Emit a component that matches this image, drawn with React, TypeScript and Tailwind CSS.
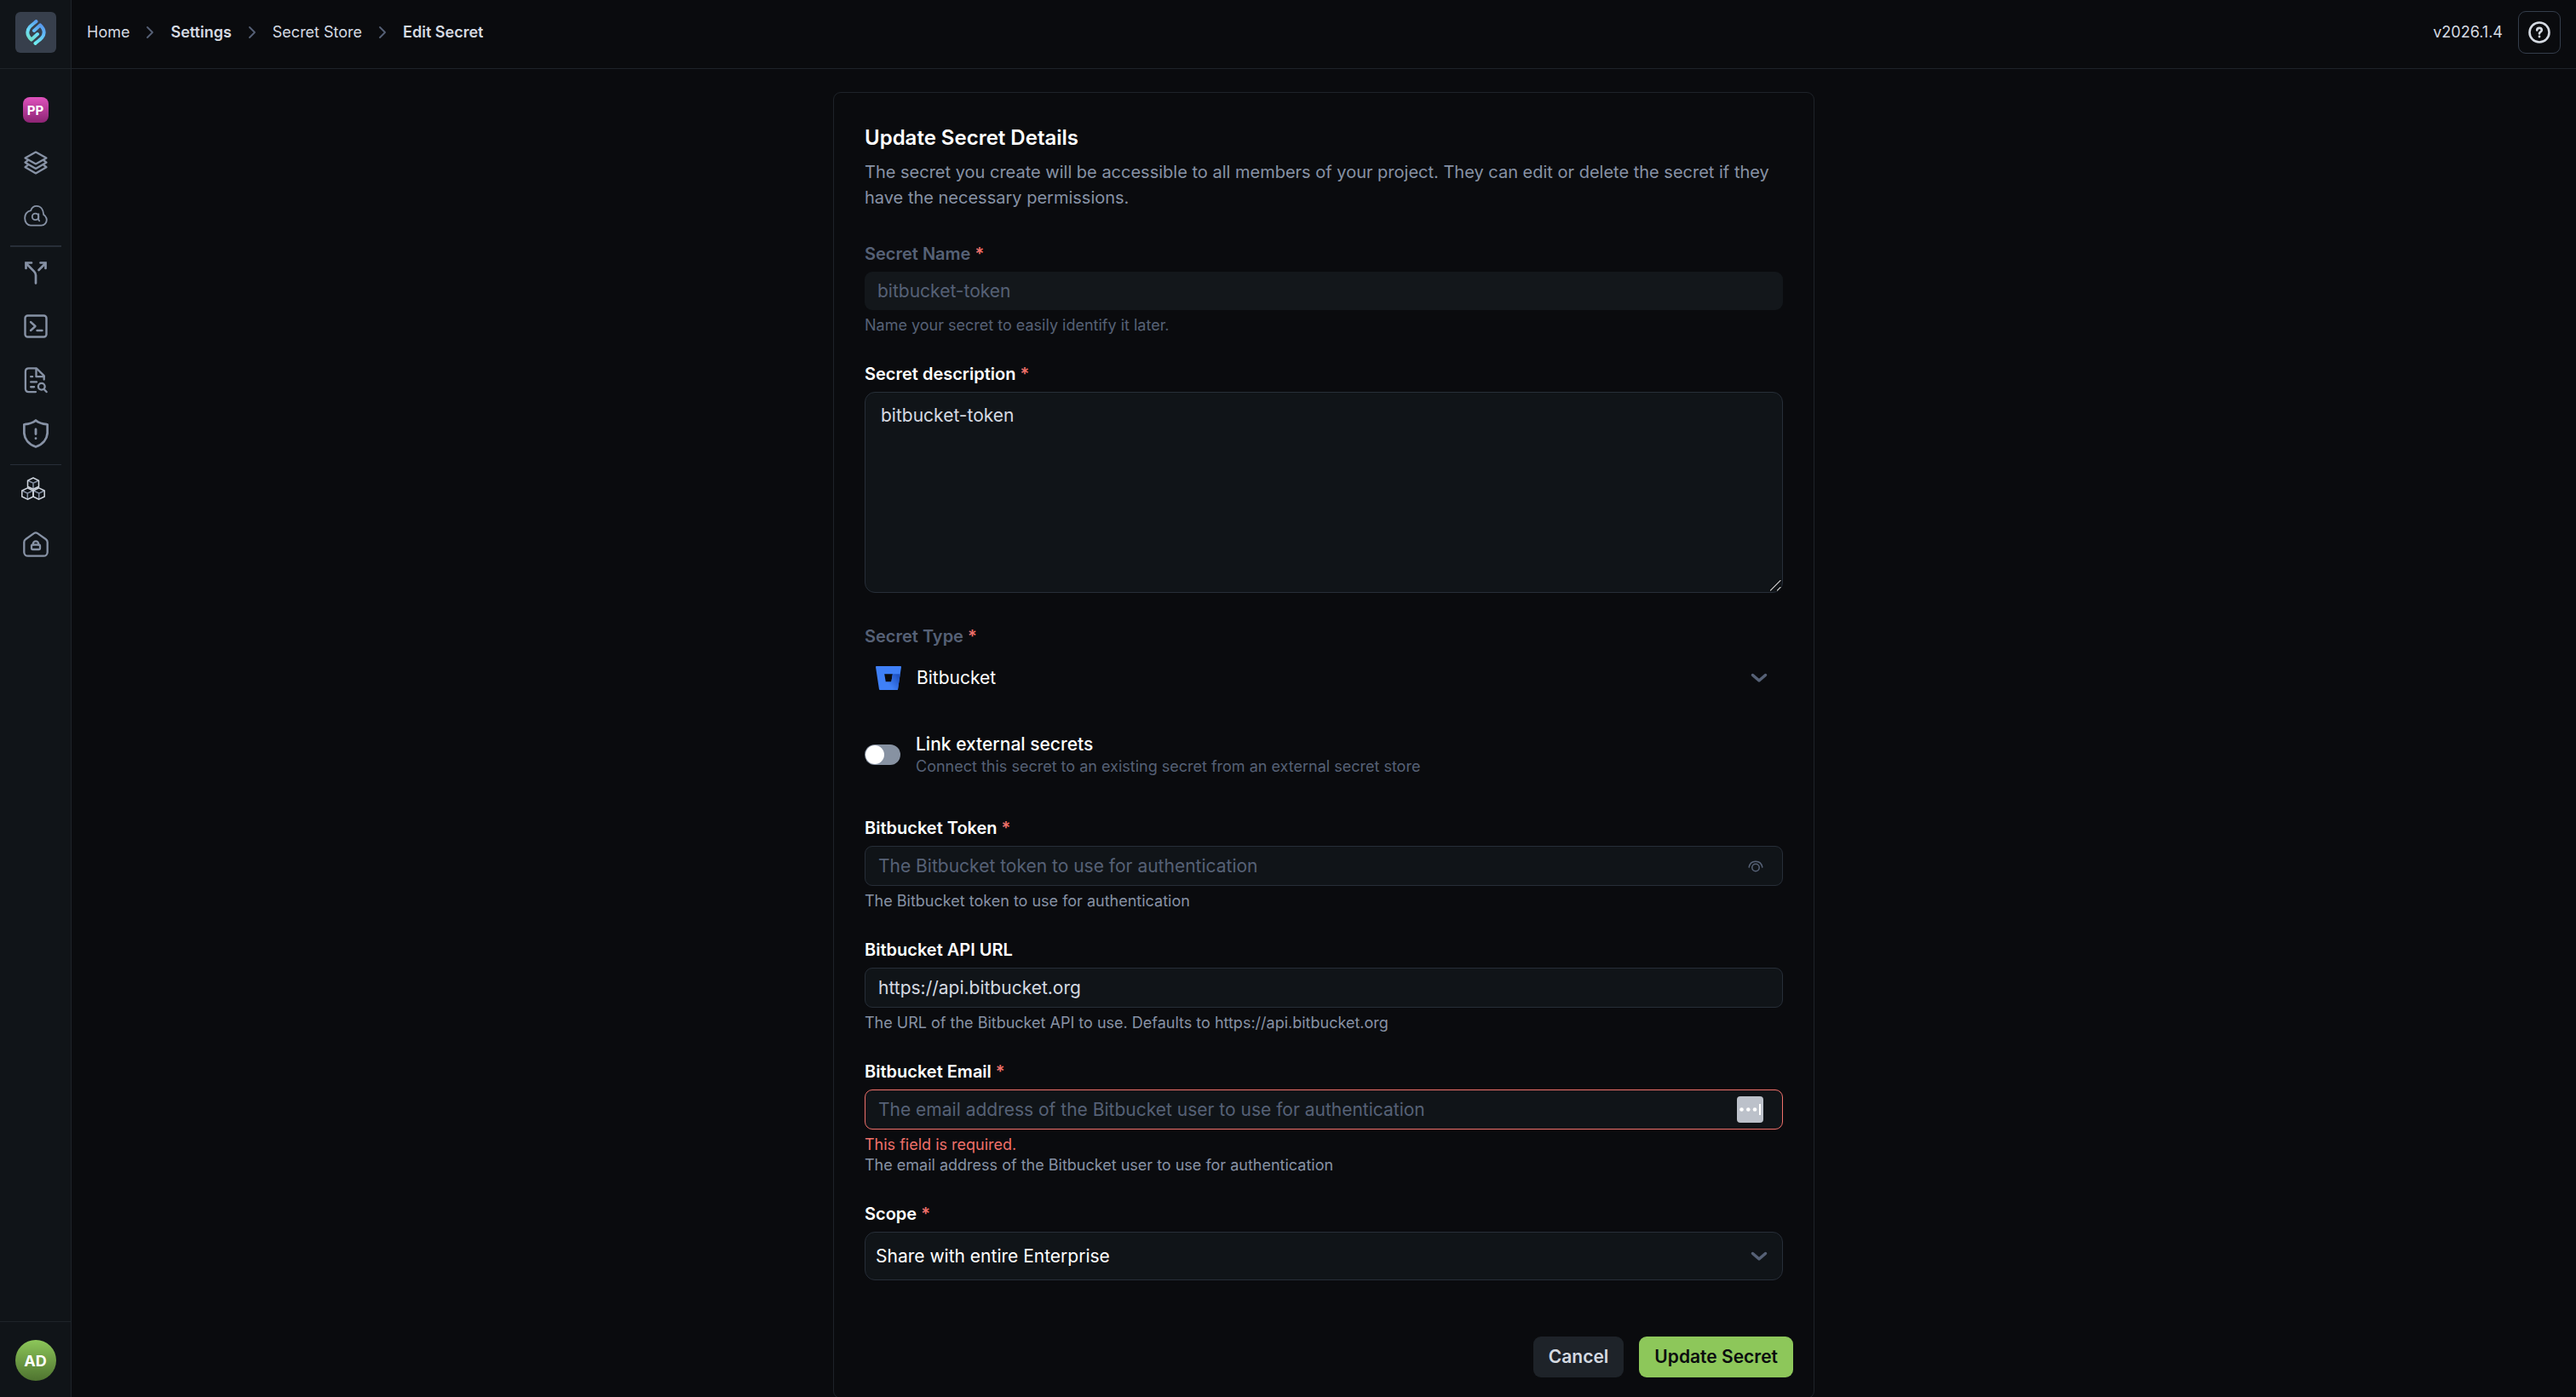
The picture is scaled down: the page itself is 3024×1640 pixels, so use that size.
import React, { useState } from "react";

type IconProps = { className?: string };

function LogoIcon() {
  return (
    <svg viewBox="0 0 24 30" className="h-[30px] w-6" fill="none" strokeWidth="4" strokeLinecap="round" strokeLinejoin="round" aria-hidden="true">
      <defs>
        <linearGradient id="logo-a" x1="4" y1="26" x2="14" y2="2" gradientUnits="userSpaceOnUse">
          <stop offset="0" stopColor="#72dfc0" />
          <stop offset="0.5" stopColor="#6cdcfa" />
          <stop offset="1" stopColor="#5a9df0" />
        </linearGradient>
        <linearGradient id="logo-b" x1="10" y1="28" x2="20" y2="4" gradientUnits="userSpaceOnUse">
          <stop offset="0" stopColor="#6ff0f0" />
          <stop offset="0.5" stopColor="#62bdf8" />
          <stop offset="1" stopColor="#5590ea" />
        </linearGradient>
      </defs>
      <path d="M12.5 2.2C7 6.500 2.300 9.500 2.300 15c0 4 2.200 6.500 4.500 8.600L14 17" stroke="url(#logo-a)" />
      <path d="M11.5 27.800C17 23.500 21.700 20.500 21.700 15c0-4-2.200-6.500-4.500-8.600L10 13" stroke="url(#logo-b)" />
    </svg>
  );
}

function LayersIcon({ className }: IconProps) {
  return (
    <svg viewBox="0 0 28 28" className={className} fill="none" stroke="currentColor" strokeWidth="2.200" strokeLinejoin="round" strokeLinecap="round" aria-hidden="true">
      <path d="M14 1.500 26.500 8.500 14 15.500 1.500 8.500Z" />
      <path d="M4.500 11.500 1.500 13.700 14 21l12.500-7.300-3-2.200" />
      <path d="M4.500 17 1.500 19.200 14 26.500l12.500-7.300-3-2.200" />
    </svg>
  );
}

function CloudSearchIcon({ className }: IconProps) {
  return (
    <svg viewBox="0 0 30 28" className={className} fill="none" stroke="currentColor" strokeWidth="2" strokeLinejoin="round" strokeLinecap="round" aria-hidden="true">
      <path d="M8.500 26.500h13.500c4 0 6.800-3.200 6.800-7 0-3-1.800-5-3.800-6.500C24.500 6.500 21 2 16 2c-3.600 0-6.200 2.300-7.200 5.600C4 8.800 1.200 12.800 1.200 17.500c0 5 3 9 7.300 9Z" />
      <circle cx="14.500" cy="15.500" r="4" />
      <path d="M18.500 12v7.500l1 1.200" />
    </svg>
  );
}

function SplitIcon({ className }: IconProps) {
  return (
    <svg viewBox="0 0 28 28" className={className} fill="none" stroke="currentColor" strokeWidth="2.700" strokeLinejoin="miter" strokeLinecap="round" aria-hidden="true">
      <path d="M14 26.500v-9.500c0-2-.6-3-2-4.400L3 3.500" />
      <path d="M2.500 9V2.500H9" />
      <path d="M17.500 11 25 3.500" />
      <path d="M19.500 2.500h6V9" />
    </svg>
  );
}

function TerminalIcon({ className }: IconProps) {
  return (
    <svg viewBox="0 0 28 28" className={className} fill="none" stroke="currentColor" strokeWidth="2.400" strokeLinejoin="round" strokeLinecap="round" aria-hidden="true">
      <rect x="1.500" y="1.500" width="25" height="25" rx="3" />
      <path d="m8 9 5.500 5L8 19M15.500 19h6" />
    </svg>
  );
}

function DocSearchIcon({ className }: IconProps) {
  return (
    <svg viewBox="0 0 28 32" className={className} fill="none" stroke="currentColor" strokeWidth="2.400" strokeLinejoin="round" strokeLinecap="round" aria-hidden="true">
      <path d="M14 30H5.500C3.300 30 1.500 28.500 1.500 26V5.500C1.500 3.300 3 1.500 5.500 1.500H15l9 9V15" />
      <path d="M14.500 2v9.500H24" />
      <path d="M8 11.500h2M8 18h7M8 24h4" />
      <circle cx="21" cy="23.500" r="4" />
      <path d="m24 26.800 3 3.200" />
    </svg>
  );
}

function ShieldIcon({ className }: IconProps) {
  return (
    <svg viewBox="0 0 30 34" className={className} fill="none" stroke="currentColor" strokeWidth="2.800" strokeLinejoin="round" strokeLinecap="round" aria-hidden="true">
      <path d="M15 1.500C12 4 7.500 5.700 2 6.200c-.5 0-.7.3-.7.800V15c0 9 6 15 13.700 17.500C22.700 30 28.700 24 28.700 15V7c0-.5-.2-.8-.7-.8C22.500 5.700 18 4 15 1.500Z" />
      <path d="M15 12v5.500M15 22.600v.1" />
    </svg>
  );
}

function CubesIcon({ className }: IconProps) {
  return (
    <svg viewBox="0 0 33 27" className={className} fill="none" strokeLinejoin="round" strokeLinecap="round" aria-hidden="true">
      <g stroke="#8792a5" strokeWidth="1.500">
        <path d="m8.500 4.500 5.500 2.700 5.500-2.700M14 7.200v6" />
        <path d="m2 16.500 5.300 2.600 5.300-2.600M7.300 19.100v6" />
        <path d="m15.500 16.500 5.300 2.600 5.300-2.600M20.700 19.100v6" />
      </g>
      <g stroke="#cfd5de" strokeWidth="1.500">
        <path d="M14 1 20.500 4.200v7L14 14.200l-6.500-3v-7Z" />
        <path d="m7.300 12.800 6.700 3.200v7l-6.700 3.200L.8 23v-7Z" />
        <path d="m20.700 12.800 6.500 3.200v7l-6.500 3.200L14 23v-7Z" />
      </g>
    </svg>
  );
}

function HouseLockIcon({ className }: IconProps) {
  return (
    <svg viewBox="0 0 30 30" className={className} fill="none" stroke="currentColor" strokeWidth="2.300" strokeLinejoin="round" strokeLinecap="round" aria-hidden="true">
      <path d="M12.800 2.100c1.300-.9 3-.9 4.300 0l9.700 6.900c1.100.8 1.900 2.100 1.900 3.500v11.700c0 2.500-2 4.500-4.500 4.500H5.800c-2.500 0-4.500-2-4.500-4.500V12.500c0-1.400.7-2.700 1.900-3.500Z" />
      <rect x="10" y="15.500" width="10" height="5.500" rx="1.500" />
      <path d="M11.800 15.500v-1a3.200 3.200 0 0 1 6.400 0v1" />
    </svg>
  );
}

function HelpIcon() {
  return (
    <svg viewBox="0 0 26 26" className="size-[26px]" fill="none" stroke="currentColor" strokeLinecap="round" strokeLinejoin="round" aria-hidden="true">
      <circle cx="13" cy="13" r="11.500" strokeWidth="2.600" />
      <path d="M10.200 10.500c0-1.500 1.200-2.600 2.800-2.600s2.800 1 2.800 2.500c0 2-2.800 2-2.800 4" strokeWidth="2.600" />
      <path d="M13 17.900v.1" strokeWidth="2.800" />
    </svg>
  );
}

function BitbucketIcon() {
  return (
    <svg viewBox="0 0 30 28" className="h-7 w-[30px] shrink-0" aria-hidden="true">
      <defs>
        <linearGradient id="bb-shade" x1="28" y1="10" x2="15" y2="21" gradientUnits="userSpaceOnUse">
          <stop offset="0.150" stopColor="#1f53c4" />
          <stop offset="1" stopColor="#3f80f7" />
        </linearGradient>
      </defs>
      <path fillRule="evenodd" fill="#3f80f7" d="M.9 0h28.200c.6 0 1 .5.900 1.100L26 27.200c-.1.500-.5.800-1 .8H5c-.5 0-.9-.3-1-.8L0 1.100C-.1.500.3 0 .9 0ZM10.200 9.200l1.600 9.400h6.500l1.600-9.400Z" />
      <path fill="url(#bb-shade)" d="M28.700 9.200h-8.800l-1.600 9.400h-6.500L5 27.800c.2.100.4.200.7.200H25c.5 0 .9-.3 1-.8Z" />
    </svg>
  );
}

function Chevron({ className }: IconProps) {
  return (
    <svg viewBox="0 0 20 12" className={className} fill="none" stroke="currentColor" strokeWidth="3.500" strokeLinecap="round" strokeLinejoin="round" aria-hidden="true">
      <path d="m2.500 2.500 7.500 6.500 7.500-6.500" />
    </svg>
  );
}

function EyeIcon() {
  return (
    <svg viewBox="0 0 18 14" className="h-3.5 w-[18px]" fill="none" stroke="currentColor" strokeWidth="1.500" strokeLinecap="round" aria-hidden="true">
      <path d="M1.200 8C2 3.800 5.200 1.200 9 1.200S16 3.800 16.800 8" />
      <circle cx="9" cy="8.500" r="4.200" />
    </svg>
  );
}

function ResizeGrip({ className }: IconProps) {
  return (
    <svg viewBox="0 0 14 14" className={className} fill="none" strokeLinecap="round" aria-hidden="true">
      <path d="M1.500 13 13 1.500M9 13.200l4.200-4.200" stroke="#000" strokeWidth="3" />
      <path d="M1.500 13 13 1.500M9.500 13l3.500-3.500" stroke="#b4b6b8" strokeWidth="1.500" />
    </svg>
  );
}

function PasswordBadge() {
  return (
    <svg viewBox="0 0 31 31" className="size-[31px]" aria-hidden="true">
      <rect width="31" height="31" rx="4" fill="#bcc1ca" />
      <g fill="#fff">
        <circle cx="5.500" cy="15.500" r="2.300" />
        <circle cx="13.300" cy="15.500" r="2.300" />
        <circle cx="21" cy="15.500" r="2.300" />
        <rect x="26" y="9" width="2" height="13" />
      </g>
    </svg>
  );
}

const crumbs = [
  { label: "Home", strong: false },
  { label: "Settings", strong: true },
  { label: "Secret Store", strong: false },
  { label: "Edit Secret", strong: true },
];

function Header() {
  return (
    <header className="flex h-[81px] shrink-0 items-center justify-between border-b border-[#1e2329] pr-[18px] pb-1 pl-[18px] text-[18px] leading-6 text-[#d5dae2]">
      <nav aria-label="Breadcrumb">
        <ol className="flex items-center gap-5">
          {crumbs.map((crumb, index) => (
            <li key={crumb.label} className="flex items-center gap-5">
              {index > 0 && (
                <svg viewBox="0 0 8 14" className="h-3.5 w-2 text-[#566176]" fill="none" stroke="currentColor" strokeWidth="1.800" strokeLinecap="round" strokeLinejoin="round" aria-hidden="true">
                  <path d="m1 1 6 6-6 6" />
                </svg>
              )}
              <a href="#" className={crumb.strong ? "font-semibold" : "font-normal"}>
                {crumb.label}
              </a>
            </li>
          ))}
        </ol>
      </nav>
      <div className="flex items-center gap-[18px]">
        <span>v2026.1.4</span>
        <button type="button" aria-label="Help" className="flex size-[50px] items-center justify-center rounded-[9px] border border-[#343d4b]">
          <HelpIcon />
        </button>
      </div>
    </header>
  );
}

function NavLink({ label, children }: { label: string; children: React.ReactNode }) {
  return (
    <a href="#" aria-label={label} className="flex h-8 w-full items-center justify-center">
      {children}
    </a>
  );
}

function Sidebar() {
  return (
    <aside className="flex w-[84px] shrink-0 flex-col border-r border-[#1e2329] bg-[#101418] text-[#8792a5]">
      <div className="flex h-[81px] shrink-0 items-center justify-center border-b border-[#1e2329] pb-1">
        <a href="#" aria-label="Dashboard" className="flex size-12 items-center justify-center rounded-md bg-[#373f4c]">
          <LogoIcon />
        </a>
      </div>
      <nav aria-label="Main" className="flex flex-1 flex-col items-center pt-8">
        <div className="flex w-full flex-col gap-[30px]">
          <NavLink label="Project">
            <span className="flex size-[30px] items-center justify-center rounded-lg bg-linear-to-b from-[#e052bd] to-[#8d2474] text-[15px] leading-none font-bold text-white">PP</span>
          </NavLink>
          <NavLink label="Layers">
            <LayersIcon className="size-7" />
          </NavLink>
          <NavLink label="Cloud search">
            <CloudSearchIcon className="h-[26px] w-[30px]" />
          </NavLink>
        </div>
        <hr className="mt-[19px] h-0.5 w-[60px] border-0 bg-[#272e38]" />
        <div className="mt-3.5 flex w-full flex-col gap-[31px]">
          <NavLink label="Pipelines">
            <SplitIcon className="size-7" />
          </NavLink>
          <NavLink label="Terminal">
            <TerminalIcon className="size-7" />
          </NavLink>
          <NavLink label="Reports">
            <DocSearchIcon className="h-[31px] w-7" />
          </NavLink>
          <NavLink label="Security">
            <ShieldIcon className="h-[34px] w-[30px]" />
          </NavLink>
        </div>
        <hr className="mt-5 h-px w-[60px] border-0 bg-[#272e38]" />
        <div className="mt-[11px] flex w-full flex-col gap-[34px]">
          <NavLink label="Components">
            <CubesIcon className="h-[27px] w-[33px]" />
          </NavLink>
          <NavLink label="Access">
            <HouseLockIcon className="size-[30px]" />
          </NavLink>
        </div>
      </nav>
      <div className="flex h-[89px] shrink-0 justify-center border-t border-[#1e2329] pt-[21px]">
        <button type="button" aria-label="Account" className="flex size-12 items-center justify-center rounded-full bg-linear-to-b from-[#8dc75a] to-[#4f7430] text-[18px] font-bold text-white">
          AD
        </button>
      </div>
    </aside>
  );
}

function Label({ htmlFor, required, muted, children }: { htmlFor: string; required?: boolean; muted?: boolean; children: React.ReactNode }) {
  return (
    <label htmlFor={htmlFor} className={muted ? "mb-[9px] block text-[20px] leading-6 font-semibold text-[#566176]" : "mb-[9px] block text-[20px] leading-6 font-semibold text-white"}>
      {children}
      {required && <span className="text-[#f0706a]"> *</span>}
    </label>
  );
}

const fieldClass = "block h-[47px] w-full rounded-[9px] border border-[#272e38] bg-[#101418] px-[15px] text-[21px] text-[#d5dae2] placeholder:text-[#566176] outline-none";

export default function App() {
  const [description, setDescription] = useState("bitbucket-token");
  const [linked, setLinked] = useState(false);
  const [token, setToken] = useState("");
  const [url, setUrl] = useState("https://api.bitbucket.org");
  const [email, setEmail] = useState("");

  return (
    <div className="flex h-screen bg-[#0a0b0e] font-['Inter',sans-serif]">
      <Sidebar />
      <div className="flex min-w-0 flex-1 flex-col">
        <Header />
        <main className="flex-1 overflow-hidden px-6 pt-[27px]">
          <form className="mx-auto max-w-6xl rounded-[9px] border border-[#1e2329]" onSubmit={(event) => event.preventDefault()}>
            <div className="px-9 pt-[35px]">
              <h1 className="text-[24px] leading-9 font-semibold text-white">Update Secret Details</h1>
              <p className="mt-[7px] text-[20px] leading-[30px] text-[#8792a5]">
                The secret you create will be accessible to all members of your project. They can edit or delete the secret if they have the necessary permissions.
              </p>

              <div className="mt-[39px]">
                <Label htmlFor="name" required muted>Secret Name</Label>
                <input id="name" disabled value="bitbucket-token" readOnly className="block h-[45px] w-full rounded-[9px] bg-[#13171b] px-[15px] text-[21px] text-[#566176]" />
                <p className="mt-[6px] text-[18px] leading-6 text-[#566176]">Name your secret to easily identify it later.</p>
              </div>

              <div className="mt-[33px]">
                <Label htmlFor="description" required>Secret description</Label>
                <div className="relative">
                  <textarea
                    id="description"
                    value={description}
                    onChange={(event) => setDescription(event.target.value)}
                    className="block h-[236px] w-full resize-y rounded-xl border border-[#272e38] bg-[#101418] px-[18px] py-3 text-[21px] leading-[30px] text-[#d5dae2] outline-none [&::-webkit-resizer]:bg-transparent"
                  />
                  <ResizeGrip className="pointer-events-none absolute right-0.5 bottom-0.5 size-3.5" />
                </div>
              </div>

              <div className="mt-[39px]">
                <Label htmlFor="type" required muted>Secret Type</Label>
                <div className="relative flex h-14 items-center gap-[18px] pl-[13px]">
                  <BitbucketIcon />
                  <select id="type" disabled className="h-full flex-1 appearance-none bg-transparent text-[21px] text-white opacity-100">
                    <option>Bitbucket</option>
                  </select>
                  <Chevron className="pointer-events-none absolute right-[18px] h-3 w-5 text-[#566176]" />
                </div>
              </div>

              <div className="mt-9 flex items-center gap-[18px]">
                <label className="relative block h-6 w-[42px] shrink-0 cursor-pointer">
                  <input
                    type="checkbox"
                    role="switch"
                    aria-labelledby="link-title"
                    checked={linked}
                    onChange={(event) => setLinked(event.target.checked)}
                    className="peer block h-6 w-[42px] cursor-pointer appearance-none rounded-full bg-[#8792a2] checked:bg-[#8dc75a]"
                  />
                  <span className="pointer-events-none absolute top-px left-px size-[22px] rounded-full bg-white peer-checked:left-[19px]" />
                </label>
                <div>
                  <p id="link-title" className="text-[21px] leading-7 font-medium text-white">Link external secrets</p>
                  <p className="text-[18px] leading-6 text-[#566176]">Connect this secret to an existing secret from an external secret store</p>
                </div>
              </div>

              <div className="mt-12">
                <Label htmlFor="token" required>Bitbucket Token</Label>
                <div className="relative">
                  <input id="token" type="password" placeholder="The Bitbucket token to use for authentication" value={token} onChange={(event) => setToken(event.target.value)} className={fieldClass} />
                  <button type="button" aria-label="Show token" className="absolute inset-y-0 right-[23px] flex items-center text-[#566176]">
                    <EyeIcon />
                  </button>
                </div>
                <p className="mt-[6px] text-[18px] leading-6 text-[#8792a5]">The Bitbucket token to use for authentication</p>
              </div>

              <div className="mt-[33px]">
                <Label htmlFor="url">Bitbucket API URL</Label>
                <input id="url" value={url} onChange={(event) => setUrl(event.target.value)} className={fieldClass} />
                <p className="mt-[6px] text-[18px] leading-6 text-[#8792a5]">The URL of the Bitbucket API to use. Defaults to https://api.bitbucket.org</p>
              </div>

              <div className="mt-[33px]">
                <Label htmlFor="email" required>Bitbucket Email</Label>
                <div className="relative">
                  <input
                    id="email"
                    aria-invalid="true"
                    placeholder="The email address of the Bitbucket user to use for authentication"
                    value={email}
                    onChange={(event) => setEmail(event.target.value)}
                    className="block h-[47px] w-full rounded-[9px] border border-[#f0706a] bg-[#101418] px-[15px] text-[21px] text-[#d5dae2] placeholder:text-[#566176] outline-none"
                  />
                  <button type="button" aria-label="Fill from password manager" className="absolute inset-y-0 right-[23px] flex items-center">
                    <PasswordBadge />
                  </button>
                </div>
                <p className="mt-[6px] text-[18px] leading-6 text-[#f0706a]">This field is required.</p>
                <p className="text-[18px] leading-6 text-[#8792a5]">The email address of the Bitbucket user to use for authentication</p>
              </div>

              <div className="mt-[33px]">
                <Label htmlFor="scope" required>Scope</Label>
                <div className="relative flex items-center">
                  <select id="scope" className="h-[57px] w-full appearance-none rounded-xl border border-[#272e38] bg-[#101418] px-3 text-[21px] text-white outline-none">
                    <option>Share with entire Enterprise</option>
                  </select>
                  <Chevron className="pointer-events-none absolute right-[18px] h-3 w-5 text-[#566176]" />
                </div>
              </div>
            </div>

            <div className="mt-[42px] flex justify-end gap-[18px] p-6 text-[21px] font-semibold">
              <button type="button" className="h-12 rounded-[9px] bg-[#1e2329] px-[18px] text-[#d5dae2]">Cancel</button>
              <button type="submit" className="h-12 rounded-[9px] bg-[#8dc75a] px-[18px] text-[#0a0b0e]">Update Secret</button>
            </div>
          </form>
        </main>
      </div>
    </div>
  );
}
